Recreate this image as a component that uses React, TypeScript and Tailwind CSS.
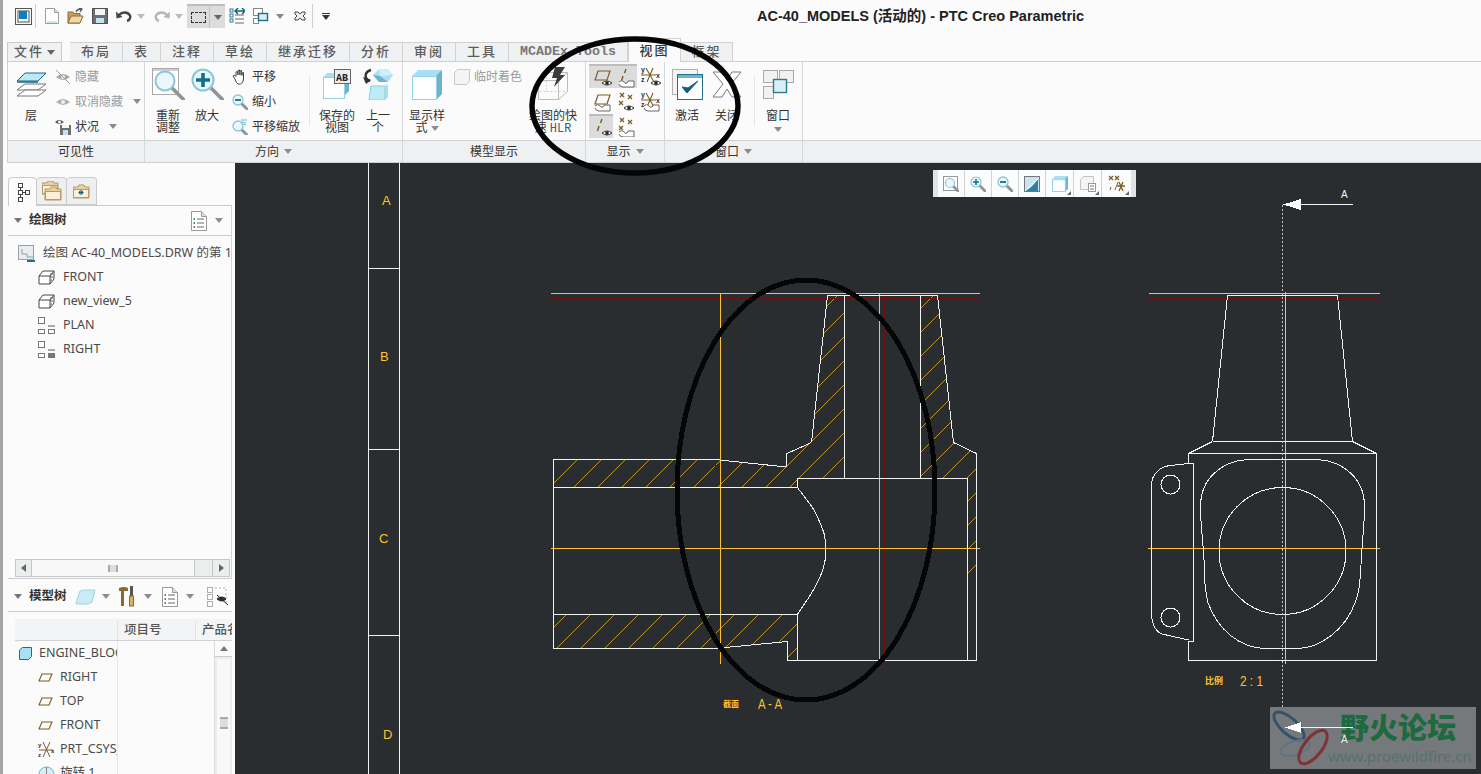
import React from 'react';

const Caret = ({ className = '', color = '#8c8c8c' }: { className?: string; color?: string }) => (
  <svg width="8" height="5" viewBox="0 0 8 5" className={className}>
    <path d="M0 0h8L4 5z" fill={color} />
  </svg>
);

const Svg = ({ w, h, children }: { w: number; h: number; children: React.ReactNode }) => (
  <svg width={w} height={h} viewBox={`0 0 ${w} ${h}`} className="block shrink-0">
    {children}
  </svg>
);

const Lens = ({ cx, cy, r, sw = 2 }: { cx: number; cy: number; r: number; sw?: number }) => (
  <g>
    <line x1={cx + r * 0.72} y1={cy + r * 0.72} x2={cx + r * 2.05} y2={cy + r * 2.05} stroke="#8f9496" strokeWidth={sw + 1.6} strokeLinecap="round" />
    <circle cx={cx} cy={cy} r={r} fill="#eaf7fb" stroke="#8cc6d8" strokeWidth={sw} />
  </g>
);

const Cube = ({ x, y, s }: { x: number; y: number; s: number }) => (
  <g>
    <path d={`M${x} ${y + s * 0.2}L${x + s * 0.2} ${y}H${x + s}V${y + s * 0.8}L${x + s * 0.8} ${y + s}V${y + s * 0.2}z`} fill="#a8dff2" />
    <path d={`M${x + s * 0.8} ${y + s * 0.2}L${x + s} ${y}V${y + s * 0.8}L${x + s * 0.8} ${y + s}z`} fill="#6fb2cc" />
    <rect x={x + 0.5} y={y + s * 0.2 + 0.5} width={s * 0.8} height={s * 0.8 - 1} fill="#fff" stroke="#93d3e8" />
  </g>
);

// quick access bar
const WindowIcon = () => (
  <Svg w={17} h={17}>
    <rect x="0.5" y="0.5" width="16" height="16" fill="#f4f4f4" stroke="#555" />
    <rect x="3" y="3" width="11" height="11" fill="#fff" stroke="#555" />
    <rect x="4" y="3" width="8" height="8" fill="#0a7fc9" />
  </Svg>
);
const NewIcon = () => (
  <Svg w={14} h={16}>
    <path d="M.5.5h9l4 4v11H.5z" fill="#fff" stroke="#9a9a9a" />
    <path d="M9.5.5v4h4" fill="#e2e2e2" stroke="#9a9a9a" />
    <path d="M2 14h10" stroke="#cfe6ef" strokeWidth="2" />
  </Svg>
);
const OpenIcon = () => (
  <Svg w={17} h={16}>
    <path d="M1 4h5l1 1.500h6V15H1z" fill="#c9a25c" stroke="#8b6a2f" />
    <path d="M1 15l3-7h12l-3 7z" fill="#efd8a5" stroke="#8b6a2f" />
    <path d="M9 4q1-3 5-3M12 0l3 1-2 3" fill="none" stroke="#555" strokeWidth="1.300" />
  </Svg>
);
const SaveIcon = () => (
  <Svg w={16} h={16}>
    <path d="M.5.500h15v15H.5z" fill="#6b7073" stroke="#4d5154" />
    <rect x="3" y="1" width="10" height="6" fill="#f5f5f5" />
    <rect x="4" y="10" width="8" height="5" fill="#c5e3ee" />
  </Svg>
);
const UndoIcon = ({ flip, color }: { flip?: boolean; color: string }) => (
  <svg width="16" height="12" viewBox="0 0 16 12" className={flip ? 'block -scale-x-100' : 'block'}>
    <path d="M3 5c3-3.500 9-3.500 11 .5 1 2.500-1 5-3 5.500" fill="none" stroke={color} strokeWidth="2.400" />
    <path d="M0 1.500l.5 7 6-1.500z" fill={color} />
  </svg>
);
const RegenIcon = () => (
  <Svg w={16} h={16}>
    <g fill="none" stroke="#2e7d9b">
      <rect x="1" y="1" width="3" height="3" />
      <rect x="1" y="6" width="3" height="3" />
      <rect x="1" y="11" width="3" height="3" />
    </g>
    <path d="M6 7h9M6 11h9M6 15h9" stroke="#666" />
    <path d="M7 3h8M13 0l3 3-3 3M9 0L6 3l3 3" fill="none" stroke="#0d5f80" strokeWidth="1.400" />
  </Svg>
);
const WindowsIcon = () => (
  <Svg w={16} h={16}>
    <rect x=".5" y=".5" width="9" height="7" fill="#fff" stroke="#888" />
    <rect x=".5" y="10.500" width="5" height="5" fill="#fff" stroke="#888" />
    <rect x="5.500" y="5.500" width="9" height="7" fill="#d9eef6" stroke="#1f6f8b" strokeWidth="1.400" />
  </Svg>
);
const CloseSmall = () => (
  <Svg w={12} h={10}>
    <path d="M1 1h3l2 2 2-2h3v2L9 5l2 2v2H8L6 7 4 9H1V7l2-2-2-2z" fill="#eee" stroke="#444" />
  </Svg>
);

// ribbon icons
const LayersIcon = () => (
  <Svg w={31} h={25}>
    <path d="M1 18l8-6h21l-8 6z" fill="#fff" stroke="#777" />
    <path d="M1 24l8-6h21l-8 6z" fill="#fff" stroke="#777" />
    <path d="M1 9l8-8h21l-8 8z" fill="#bde7f3" stroke="#1d6a87" />
    <path d="M1 10h21" stroke="#0d5f80" strokeWidth="1.400" />
  </Svg>
);
const RefitIcon = () => (
  <Svg w={33} h={32}>
    <rect x=".5" y=".5" width="26" height="26" fill="#fff" stroke="#a9a9a9" />
    <rect x="1" y="1" width="25" height="2" fill="#cfcfcf" />
    <Lens cx={13} cy={13} r={9.500} />
  </Svg>
);
const ZoomInIcon = () => (
  <Svg w={33} h={32}>
    <Lens cx={12} cy={12} r={10.500} />
    <path d="M12 5v14M5 12h14" stroke="#0f6f92" strokeWidth="3.600" />
  </Svg>
);
const HandIcon = () => (
  <Svg w={16} h={16}>
    <path d="M3 10L1 7l1.500-1L4 7.500V3l1.500-.5L6 6V1.500L7.500 1 8 6V2l1.500-.5L10 6.500V4l1.500-.5V10q0 4-3 5H6q-2-1-3-5z" fill="#fff" stroke="#444" />
  </Svg>
);
const ZoomOutIcon = () => (
  <Svg w={16} h={16}>
    <Lens cx={6} cy={6} r={5} sw={1.300} />
    <path d="M3 6h6" stroke="#0f6f92" strokeWidth="1.800" />
  </Svg>
);
const PanZoomIcon = () => (
  <Svg w={16} h={16}>
    <Lens cx={6} cy={7} r={5} sw={1.300} />
    <path d="M9 1q3 0 6 0M10 3q2 0 4 1M11 5l3 1" stroke="#62c1de" fill="none" />
  </Svg>
);
const SavedViewIcon = () => (
  <Svg w={28} h={30}>
    <path d="M0 8l4-4h22v18l-4 4H0z" fill="#a8dff2" />
    <path d="M22 8l4-4v18l-4 4z" fill="#6fb2cc" />
    <rect x=".5" y="8.500" width="21" height="21" fill="#fff" stroke="#93d3e8" />
    <rect x="11.500" y=".5" width="16" height="14" fill="#eee" stroke="#666" />
    <text x="13" y="12" fontSize="10" fontWeight="700" fill="#222" fontFamily="Liberation Mono">AB</text>
  </Svg>
);
const PrevIcon = () => (
  <Svg w={31} h={32}>
    <path d="M10 7l6-6h9l5 6-5 7h-9z" fill="#a8dff2" />
    <path d="M16 1h9l5 6-13 1z" fill="#cdeffa" />
    <path d="M10 7l7 1 8 6h-9z" fill="#6fb2cc" />
    <path d="M8 18h14l3-2v13l-3 3H6z" fill="#a8dff2" />
    <path d="M8 18h14v14H6z" fill="#bdebf8" stroke="#8ccfe4" />
    <path d="M7 13C1 11 1 4 8 2" fill="none" stroke="#333" strokeWidth="2.400" />
    <path d="M0 9l3 7 5-4z" fill="#333" />
  </Svg>
);
const StyleIcon = () => (
  <Svg w={30} h={31}>
    <Cube x={0} y={1} s={30} />
  </Svg>
);
const HlrIcon = () => (
  <Svg w={30} h={34}>
    <path d="M.5 13.500h20v19H.5zM.5 13.500l8-8h21v19l-9 8M20.500 13.500l9-8" fill="none" stroke="#bcbcbc" />
    <path d="M8.500 5.500v19H.5M8.500 24.500h21" fill="none" stroke="#cfcfcf" strokeDasharray="2 2" />
    <path d="M17 0h10l-5 8h5l-11 12 3-9h-5z" fill="#3b3b3b" />
  </Svg>
);
const ActivateIcon = () => (
  <Svg w={31} h={31}>
    <rect x=".5" y=".5" width="25" height="25" fill="#f4f4f4" stroke="#b0b0b0" />
    <rect x="5.500" y="5.500" width="25" height="25" fill="#fff" stroke="#1f6f8b" />
    <rect x="6" y="6" width="24" height="3" fill="#6fb2cc" />
    <path d="M10 18l5 6 11-12-10 7z" fill="#0f5f80" stroke="#0f5f80" />
  </Svg>
);
const CloseLarge = () => (
  <Svg w={30} h={27}>
    <path d="M1 1h9l5 8 5-8h9L19 13l10 13h-9l-5-8-5 8H1l10-13z" fill="#fff" stroke="#7a7a7a" />
  </Svg>
);
const WindowLarge = () => (
  <Svg w={31} h={29}>
    <rect x=".5" y=".5" width="14" height="12" fill="#f1f1f1" stroke="#a9a9a9" />
    <rect x="16.500" y=".5" width="14" height="12" fill="#f1f1f1" stroke="#a9a9a9" />
    <rect x=".5" y="16.500" width="10" height="12" fill="#f1f1f1" stroke="#a9a9a9" />
    <rect x="10.500" y="9.500" width="13" height="13" fill="#d9eef6" stroke="#2a7b98" strokeWidth="1.400" />
  </Svg>
);
const EyeOff = () => (
  <Svg w={16} h={16}>
    <path d="M1 8q7-6 14 0q-7 6-14 0z" fill="#aaa" />
    <circle cx="8" cy="8" r="2" fill="#eee" />
    <path d="M1 1l14 14" stroke="#999" />
  </Svg>
);
const EyeOn = () => (
  <Svg w={16} h={16}>
    <path d="M1 8q7-6 14 0q-7 6-14 0z" fill="#b0b0b0" />
    <circle cx="8" cy="8" r="2" fill="#eee" />
  </Svg>
);
const StateIcon = () => (
  <Svg w={16} h={17}>
    <path d="M0 4q4-4 9 0q-5 4-9 0z" fill="#555" />
    <circle cx="4.500" cy="4" r="1.500" fill="#fff" />
    <rect x="5" y="7" width="11" height="10" fill="#6b7073" />
    <rect x="7" y="7" width="7" height="3" fill="#f5f5f5" />
    <rect x="8" y="12" width="5" height="5" fill="#c5e3ee" />
  </Svg>
);

const brown = '#7a5c25';
const Eye = ({ x, y }: { x: number; y: number }) => (
  <g>
    <path d={`M${x - 5} ${y}q5-4 10 0q-5 4-10 0z`} fill="#fff" stroke="#333" />
    <circle cx={x} cy={y} r="1.800" fill="#222" />
  </g>
);
const Note = ({ x, y }: { x: number; y: number }) => (
  <path d={`M${x} ${y + 3}q3-3 5 0t4 0v-1h6v6h-11q-3 0-4-3`} fill="#fff" stroke="#666" />
);
const Plane = () => <path d="M5 14L8 5h12l-3 9z" fill="none" stroke={brown} strokeWidth="1.200" />;
const Axis = () => <path d="M12 3l-1.500 4M9 10l-1.500 5" stroke={brown} strokeWidth="1.400" />;
const Cross = ({ x, y }: { x: number; y: number }) => (
  <path d={`M${x - 2} ${y - 2}l4 4M${x + 2} ${y - 2}l-4 4`} stroke={brown} strokeWidth="1.200" />
);
const Points = () => (
  <>
    <Cross x={8} y={5} />
    <Cross x={16} y={7} />
    <Cross x={7} y={13} />
  </>
);
const Csys = () => (
  <>
    <path d="M8 3l8 14M15 3L9 17M3 10h15" stroke={brown} strokeWidth="1.100" />
    <text x="3" y="7" fontSize="7" fontWeight="700" fill="#333" fontFamily="Liberation Sans">y</text>
    <text x="3" y="17" fontSize="7" fontWeight="700" fill="#333" fontFamily="Liberation Sans">z</text>
    <text x="18" y="13" fontSize="7" fontWeight="700" fill="#333" fontFamily="Liberation Sans">x</text>
  </>
);

const displayCells: { on?: boolean; el?: React.ReactNode }[] = [
  { on: true, el: <><Plane /><Eye x={17} y={17} /></> },
  { on: true, el: <><Axis /><Note x={5} y={13} /></> },
  { el: <><Csys /><Eye x={18} y={18} /></> },
  { el: <><Plane /><Note x={5} y={13} /></> },
  { el: <><Points /><Eye x={15} y={18} /></> },
  { el: <><Csys /><Note x={6} y={13} /></> },
  { on: true, el: <><Axis /><Eye x={17} y={17} /></> },
  { el: <><Points /><Note x={5} y={14} /></> },
];

// left panel icons
const TreeTabIcon = () => (
  <Svg w={14} h={19}>
    <g fill="none" stroke="#444">
      <rect x="2.500" y=".5" width="4" height="4" />
      <rect x="2.500" y="7.500" width="4" height="4" />
      <rect x="2.500" y="14.500" width="4" height="4" />
      <rect x="9.500" y="7.500" width="4" height="4" />
      <path d="M4.500 4.500v3M4.500 11.500v3M6.500 9.500h3" />
    </g>
  </Svg>
);
const Folder = ({ x, y }: { x: number; y: number }) => (
  <g>
    <path d={`M${x} ${y + 2}h5l1-2h5l1 2h4v11H${x}z`} fill="#ead09a" stroke="#b89a63" />
    <rect x={x + 0.5} y={y + 4.500} width="15" height="8" fill="#f8f0dc" stroke="#b89a63" />
  </g>
);
const FoldersIcon = () => (
  <Svg w={20} h={20}>
    <Folder x={0} y={0} />
    <Folder x={3} y={6} />
  </Svg>
);
const FolderStarIcon = () => (
  <Svg w={17} h={16}>
    <Folder x={0} y={2} />
    <path d="M8 7v5M5.500 9.500h5M6 8l4 3M10 8l-4 3" stroke="#0f5f80" />
  </Svg>
);
const ListIcon = () => (
  <Svg w={16} h={20}>
    <path d="M.5.5h10l5 5v14H.5z" fill="#fff" stroke="#999" />
    <path d="M10.500.5v5h5" fill="#ddd" stroke="#999" />
    <path d="M6 8h7M6 12h7M6 16h7" stroke="#666" />
    <path d="M2.500 8h1.500M2.500 12h1.500M2.500 16h1.500" stroke="#0f5f80" strokeWidth="1.500" />
  </Svg>
);
const SheetIcon = () => (
  <Svg w={17} h={17}>
    <rect x=".5" y=".5" width="15" height="14" fill="#e9edf0" stroke="#9a9fa3" />
    <path d="M4 4v5h5v3h6" fill="none" stroke="#999" />
    <path d="M9 16h8" stroke="#1f6f8b" strokeWidth="2" />
  </Svg>
);
const ViewCube = () => (
  <Svg w={17} h={15}>
    <path d="M1 6l4-5h11v8l-4 5H1zM1 6h11v8M12 6l4-5" fill="#fff" stroke="#444" />
    <path d="M12 4h3M12 7h3M12 10h2" stroke="#555" />
  </Svg>
);
const ViewBoxes = ({ dark }: { dark?: boolean }) => (
  <Svg w={17} h={17}>
    <rect x=".5" y=".5" width="6" height="6" fill="#fff" stroke="#777" />
    <rect x=".5" y="12.500" width="6" height="4" fill="#fff" stroke="#777" />
    <rect x="10.500" y="12.500" width="6" height="4" fill={dark ? '#777' : '#fff'} stroke="#777" />
    <path d="M10 9h7" stroke="#555" />
  </Svg>
);
const TreeRow = ({ icon, label, className }: { icon: React.ReactNode; label: string; className: string }) => (
  <div className={`flex h-[24px] items-center whitespace-nowrap text-[12.500px] text-[#4a4a4a] ${className}`}>
    {icon}
    <span>{label}</span>
  </div>
);
const PlaneSmall = () => (
  <svg width="15" height="9" viewBox="0 0 15 9" className="mr-[7px] shrink-0">
    <path d="M1 8l3-7h10l-3 7z" fill="none" stroke={brown} strokeWidth="1.100" />
  </svg>
);

const Large = ({ icon, className, children }: { icon: React.ReactNode; className: string; children: React.ReactNode }) => (
  <div className={`flex shrink-0 flex-col items-center text-center text-[12px] leading-[12px] text-[#333] ${className}`}>
    <div className="mb-[4px] flex h-[44px] items-center justify-center">{icon}</div>
    {children}
  </div>
);

const Small = ({ icon, label, gray, caret }: { icon: React.ReactNode; label: string; gray?: boolean; caret?: boolean }) => (
  <div className={`flex h-[25px] items-center gap-[4px] whitespace-nowrap text-[12px] ${gray ? 'text-[#9b9b9b]' : 'text-[#333]'}`}>
    {icon}
    <span>{label}</span>
    {caret && <Caret className="ml-[6px]" />}
  </div>
);

const Footer = ({ label, caret }: { label: string; caret?: boolean }) => (
  <div className="flex h-[22px] items-center justify-center gap-[5px] border-t border-[#cfd1d2] bg-[#eff0f1] text-[12px] text-[#333]">
    {label}
    {caret && <Caret />}
  </div>
);

const tabs = [
  { label: '布局', w: 'w-[53px]' },
  { label: '表', w: 'w-[38px]' },
  { label: '注释', w: 'w-[53px]' },
  { label: '草绘', w: 'w-[53px]' },
  { label: '继承迁移', w: 'w-[83px]' },
  { label: '分析', w: 'w-[53px]' },
  { label: '审阅', w: 'w-[53px]' },
  { label: '工具', w: 'w-[53px]' },
];

const hatchLines = Array.from({ length: 22 }, (_, i) => 1037 + i * 24);

const yellow = '#ffc22e';
const red = '#6a1010';
const white = '#f2f2f2';

const Drawing = () => (
  <svg viewBox="235 163 1246 611" className="block h-full w-full" shapeRendering="crispEdges" fill="none">
    <defs>
      <clipPath id="hatch">
        <path d="M553.500 459.500H715L786.500 467L787 453.500L811.500 442.500L827.500 296H844.500V478.500H797.500V487.500H553.500Z" />
        <path d="M920.500 296H937.500L953.500 442.500L976.500 453.500V660.500H967.500V478.500H920.500Z" />
        <path d="M553.500 614.500H797.500V660.500H787.500V641.500L725 647.500L553.500 648.500Z" />
      </clipPath>
    </defs>

    {/* border of the sheet */}
    <g stroke={white}>
      <path d="M368.500 163V774M399.500 163V774M368 268.500H399M368 449.500H399M368 635.500H399" />
    </g>
    <g fill={yellow} fontSize="13" fontFamily="Liberation Sans">
      <text x="382" y="205">A</text>
      <text x="380" y="361">B</text>
      <text x="379" y="543">C</text>
      <text x="383" y="739">D</text>
    </g>

    {/* section view */}
    <g stroke={yellow} strokeWidth="0.7" clipPath="url(#hatch)">
      {hatchLines.map(s => (
        <line key={s} x1={500} y1={s - 500} x2={1000} y2={s - 1000} />
      ))}
    </g>
    <path d="M550 298.500H980M550 553.500H980M715.500 293V663M884.500 293V663" stroke={red} />
    <path d="M551 293.500H980M551 548.500H980M720.500 293V664M879.500 293V663" stroke={yellow} />
    <g stroke={white}>
      <path d="M553.500 459.500H715L786.500 467L787 453.500L811.500 442.500L827.500 295.500H937.500L953.500 442.500L976.500 453.500V660.500H787.500V641.500L725 647.500L715 648.500H553.500Z" />
      <path d="M553.500 487.500H797.500V478.500H967.500V660.500M844.500 295.500V478.500M920.500 295.500V478.500M553.500 614.500H797.500V660.500" />
      <path d="M797.500 487.500C803 496 813 505 818 518C822 528 826 534 826 550C826 568 818 582 811 594C805 604 801 608 797.500 614.500" />
    </g>
    <ellipse cx="806" cy="490" rx="129" ry="210" stroke="#050505" strokeWidth="5" />
    <g fill={yellow}>
      <text x="723" y="707" fontSize="8" fontWeight="700" fontFamily="Noto Sans CJK SC">截面</text>
      <text x="758" y="709" fontSize="14" fontFamily="Liberation Sans" textLength="24" lengthAdjust="spacingAndGlyphs">A - A</text>
      <text x="1205" y="684" fontSize="9" fontWeight="700" fontFamily="Noto Sans CJK SC">比例</text>
      <text x="1240" y="686" fontSize="15" fontFamily="Liberation Sans" textLength="23" lengthAdjust="spacingAndGlyphs">2 : 1</text>
    </g>

    {/* right view */}
    <path d="M1148 298.500H1380M1148 553.500H1378M1279.500 295V661" stroke={red} />
    <path d="M1149 293.500H1380M1148 548.500H1380M1285.500 292V664" stroke={yellow} />
    <g stroke={white}>
      <path d="M1227.500 295.500H1337.500L1352.500 441.500L1376.500 453.500V660.500H1188.500V641.500H1193.500V463.500H1188.500V453.500L1212.500 441.500ZM1212.500 441.500H1352.500M1188.500 453.500H1376.500" />
      <path d="M1188.500 463.500L1170 465.500C1158 467 1152 476 1151.500 484V616C1152 624 1156 632 1162 634L1188.500 640" />
      <circle cx="1170.500" cy="484.500" r="9.500" />
      <circle cx="1170.500" cy="617.500" r="9.500" />
      <circle cx="1282.500" cy="551" r="63.500" />
      <path d="M1248 459.500H1317C1345 461 1364 480 1364.500 505C1365 520 1362 540 1361 565C1360 580 1360 590 1355 603C1345 630 1320 648 1298 648.500H1265C1240 648 1218 630 1208 603C1205 590 1204 575 1204 560C1203 540 1200 520 1200.500 505C1201 480 1220 461 1248 459.500Z" />
    </g>
    <path d="M1282.500 205V727" stroke="#c4c4c4" strokeDasharray="2 2" />

    {/* watermark */}
    <rect x="1270" y="707" width="206" height="62" fill="#76797b" />
    <g shapeRendering="auto">
      <ellipse cx="1289" cy="726" rx="19" ry="8" transform="rotate(42 1289 726)" stroke="#33536b" strokeWidth="3" />
      <ellipse cx="1295" cy="748" rx="15" ry="7" transform="rotate(-18 1295 748)" stroke="#5d7484" strokeWidth="2" />
      <ellipse cx="1313" cy="747" rx="20" ry="9" transform="rotate(-52 1313 747)" stroke="#7f3338" strokeWidth="3" />
      <text x="1340" y="739" fontSize="29" fontWeight="900" fill="#1d6a41" fontFamily="Noto Sans CJK SC">野火论坛</text>
      <text x="1328" y="762" fontSize="15" fill="#55716f" fontFamily="Noto Sans">www.proewildfire.cn</text>
    </g>

    {/* section arrows */}
    <path d="M1300 204.500H1353M1300 727.500H1353" stroke={white} />
    <path d="M1283 204.500L1301 199V210ZM1285 727.500L1301 722V733Z" fill="#fff" />
    <g fill={white} fontSize="10" fontFamily="Liberation Sans">
      <text x="1341" y="198">A</text>
      <text x="1341" y="743">A</text>
    </g>
  </svg>
);

const FloatCell = ({ children, className }: { children: React.ReactNode; className: string }) => (
  <div className={`relative flex h-full items-center justify-center border-r border-[#d0d2d3] ${className}`}>{children}</div>
);

const Corner = () => <span className="absolute bottom-[2px] right-[2px] h-0 w-0 border-b-[4px] border-l-[4px] border-b-[#666] border-l-transparent" />;

const FloatingBar = () => (
  <div className="absolute left-[698px] top-[7px] flex h-[27px] border-x-[5px] border-[#e2e3e4] bg-[#fcfcfc]">
    <FloatCell className="w-[27px]">
      <Svg w={16} h={16}>
        <rect x=".5" y=".5" width="14" height="14" fill="#fff" stroke="#999" />
        <Lens cx={7} cy={7} r={4.500} sw={1.200} />
      </Svg>
    </FloatCell>
    <FloatCell className="w-[27px]">
      <Svg w={16} h={16}>
        <Lens cx={6} cy={6} r={5} sw={1.200} />
        <path d="M3 6h6M6 3v6" stroke="#0f6f92" strokeWidth="1.600" />
      </Svg>
    </FloatCell>
    <FloatCell className="w-[27px]">
      <ZoomOutIcon />
    </FloatCell>
    <FloatCell className="w-[27px]">
      <Svg w={16} h={16}>
        <rect x=".5" y=".5" width="15" height="15" fill="#c5e6f1" stroke="#777" />
        <path d="M1 15Q8 12 14 3V15Z" fill="#2f7f9e" />
        <path d="M1 15L14 3" stroke="#fff" />
      </Svg>
    </FloatCell>
    <FloatCell className="w-[28px]">
      <Svg w={16} h={16}>
        <Cube x={0} y={0} s={16} />
      </Svg>
      <Corner />
    </FloatCell>
    <FloatCell className="w-[28px]">
      <Svg w={16} h={16}>
        <path d="M.5 3.500l3-3h10v10l-3 3H.5z" fill="#f4f4f4" stroke="#c2c2c2" />
        <rect x="8.500" y="7.500" width="7" height="8" fill="#fff" stroke="#999" />
        <path d="M10 10h4M10 13h4" stroke="#777" />
      </Svg>
      <Corner />
    </FloatCell>
    <div className="relative flex w-[29px] items-center justify-center">
      <Svg w={18} h={17}>
        <Cross x={3} y={3} />
        <Cross x={9} y={3} />
        <path d="M10 7l-1 3M8 12l-1 3M3 12l-1 3" stroke={brown} />
        <path d="M11 7l4 9M15 7l-4 9M8 11h9" stroke={brown} strokeWidth="1.300" />
      </Svg>
      <Corner />
    </div>
  </div>
);

export default function App() {
  return (
    <div className="relative flex h-screen w-full flex-col overflow-hidden border-l-[3px] border-[#a4a4a4] bg-[#fbfbfb] [font-family:'Noto_Sans','Noto_Sans_CJK_SC',sans-serif]">
      {/* title bar */}
      <div className="relative flex h-[42px] shrink-0 items-center pb-[10px] pl-[12px]">
        <WindowIcon />
        <div className="ml-[3px] mr-[9px] h-[24px] w-px bg-[#cfcfcf]" />
        <NewIcon />
        <div className="ml-[8px]"><OpenIcon /></div>
        <div className="ml-[8px]"><SaveIcon /></div>
        <div className="ml-[8px]"><UndoIcon color="#444" /></div>
        <Caret className="ml-[5px]" color="#bbb" />
        <div className="ml-[9px]"><UndoIcon flip color="#b5b5b5" /></div>
        <Caret className="ml-[5px]" color="#bbb" />
        <div className="ml-[4px] flex h-[24px] w-[38px] border-t-2 border-[#bdbdbd] bg-[#dcdcdc]">
          <div className="flex w-[23px] items-center justify-center border-r border-[#c4c4c4]">
            <div className="h-[11px] w-[15px] border border-dashed border-[#333]" />
          </div>
          <div className="flex flex-1 items-center justify-center">
            <Caret color="#666" />
          </div>
        </div>
        <div className="ml-[4px]"><RegenIcon /></div>
        <div className="ml-[8px]"><WindowsIcon /></div>
        <Caret className="ml-[7px]" color="#888" />
        <div className="ml-[10px]"><CloseSmall /></div>
        <div className="ml-[6px] mr-[9px] h-[24px] w-px bg-[#cfcfcf]" />
        <div className="flex flex-col items-center gap-[1px]">
          <div className="h-[1px] w-[8px] bg-[#333]" />
          <Caret color="#333" />
        </div>
        <div className="absolute left-[754px] top-[6px] whitespace-nowrap text-[14.500px] font-bold leading-[20px] text-[#222] [font-family:'Liberation_Sans','Noto_Sans_CJK_SC',sans-serif]">
          AC-40_MODELS (活动的) - PTC Creo Parametric
        </div>
      </div>

      {/* tabs */}
      <div className="relative z-10 flex h-[19px] shrink-0 items-end pl-[4px] text-[13px] text-[#5c5c5c]">
        <div className="mr-[8px] flex h-[19px] w-[55px] items-center justify-center gap-[3px] border border-b-0 border-[#c9cbcc] bg-[#f0f1f2] font-medium tracking-[2px]">
          文件
          <Caret color="#666" />
        </div>
        {tabs.map(t => (
          <div key={t.label} className={`flex h-[19px] items-center justify-center border-r border-t border-[#cfd1d2] bg-[#f0f1f2] font-medium tracking-[2px] first:border-l ${t.w}`}>
            {t.label}
          </div>
        ))}
        <div className="flex h-[19px] w-[119px] items-center justify-center border-r border-t border-[#cfd1d2] bg-[#f0f1f2] text-[13.300px] font-bold text-[#777] [font-family:'Liberation_Mono',monospace]">
          MCADEx Tools
        </div>
        <div className="-mb-px flex h-[24px] w-[53px] items-center justify-center border-x border-t border-[#cfd1d2] bg-[#fbfbfb] font-medium tracking-[2px] text-[#333]">
          视图
        </div>
        <div className="flex h-[19px] w-[52px] items-center justify-center border-r border-t border-[#cfd1d2] bg-[#f0f1f2] font-medium tracking-[2px]">
          框架
        </div>
      </div>

      {/* ribbon */}
      <div className="ml-[4px] flex h-[102px] shrink-0 border-y border-l border-[#cdcfd0]">
        <div className="flex w-[137px] shrink-0 flex-col border-r border-[#d5d7d8]">
          <div className="flex flex-1">
            <Large className="w-[46px]" icon={<LayersIcon />}>层</Large>
            <div className="pl-px pt-[2px]">
              <Small gray icon={<EyeOff />} label="隐藏" />
              <Small gray caret icon={<EyeOn />} label="取消隐藏" />
              <Small caret icon={<StateIcon />} label="状况" />
            </div>
          </div>
          <Footer label="可见性" />
        </div>

        <div className="flex w-[258px] shrink-0 flex-col border-r border-[#d5d7d8]">
          <div className="flex flex-1">
            <Large className="w-[46px]" icon={<RefitIcon />}>重新<br />调整</Large>
            <Large className="w-[32px]" icon={<ZoomInIcon />}>放大</Large>
            <div className="ml-[9px] pt-[2px]">
              <Small icon={<HandIcon />} label="平移" />
              <Small icon={<ZoomOutIcon />} label="缩小" />
              <Small icon={<PanZoomIcon />} label="平移缩放" />
            </div>
            <div className="ml-[9px] mr-[5px] mt-[14px] h-[50px] w-px bg-[#e6e6e6]" />
            <Large className="w-[44px]" icon={<SavedViewIcon />}>保存的<br />视图</Large>
            <Large className="w-[38px]" icon={<PrevIcon />}>上一<br />个</Large>
          </div>
          <Footer label="方向" caret />
        </div>

        <div className="flex w-[183px] shrink-0 flex-col border-r border-[#d5d7d8]">
          <div className="flex flex-1">
            <Large className="w-[48px]" icon={<StyleIcon />}>
              显示样
              <span className="flex items-center gap-[3px]">式<Caret /></span>
            </Large>
            <div className="ml-[3px] w-[75px] pt-[2px]">
              <Small gray label="临时着色" icon={
                <Svg w={16} h={16}>
                  <path d="M.5 3.500l3-3h12v12l-3 3H.5z" fill="#f4f4f4" stroke="#c9c9c9" />
                </Svg>
              } />
            </div>
            <Large className="w-[48px]" icon={<HlrIcon />}>
              绘图的快
              <span className="whitespace-nowrap">速 <span className="[font-family:'Liberation_Mono',monospace] text-[#4a5a6a]">HLR</span></span>
            </Large>
          </div>
          <Footer label="模型显示" />
        </div>

        <div className="flex w-[79px] shrink-0 flex-col border-r border-[#d5d7d8]">
          <div className="grid flex-1 grid-cols-[24px_24px_24px] content-start gap-y-px pl-[3px] pt-[2px]">
            {displayCells.map((c, i) => (
              <div key={i} className={`flex h-[24px] w-[24px] items-center justify-center ${c.on ? 'border-t-2 border-[#bdbdbd] bg-[#dcdcdc]' : ''}`}>
                <Svg w={23} h={22}>{c.el}</Svg>
              </div>
            ))}
          </div>
          <Footer label="显示" caret />
        </div>

        <div className="flex w-[138px] shrink-0 flex-col border-r border-[#d5d7d8]">
          <div className="flex flex-1">
            <Large className="w-[44px]" icon={<ActivateIcon />}>激活</Large>
            <Large className="w-[36px]" icon={<CloseLarge />}>关闭</Large>
            <div className="ml-[9px] mt-[14px] h-[50px] w-px bg-[#e6e6e6]" />
            <Large className="w-[46px]" icon={<WindowLarge />}>
              窗口
              <Caret className="mt-[5px]" />
            </Large>
          </div>
          <Footer label="窗口" caret />
        </div>

        <div className="flex flex-1 flex-col">
          <div className="flex-1" />
          <div className="h-[22px] border-t border-[#cfd1d2] bg-[#eff0f1]" />
        </div>
      </div>

      {/* main area */}
      <div className="flex min-h-0 flex-1">
        <aside className="flex w-[232px] shrink-0 flex-col overflow-hidden border-r-[3px] border-[#fbfbfb] pl-[5px]">
          <div className="mt-[14px] flex h-[28px] shrink-0 items-end">
            <div className="z-10 -mb-px flex h-[29px] w-[29px] items-center justify-center rounded-t-sm border border-b-0 border-[#c9cbcc] bg-[#fbfbfb]">
              <TreeTabIcon />
            </div>
            <div className="flex h-[28px] w-[30px] items-center justify-center rounded-t-sm border-y border-r border-[#c9cbcc] bg-[#eeeff0]">
              <FoldersIcon />
            </div>
            <div className="flex h-[28px] w-[30px] items-center justify-center rounded-t-sm border-y border-r border-[#c9cbcc] bg-[#eeeff0]">
              <FolderStarIcon />
            </div>
          </div>

          <div className="flex h-[373px] shrink-0 flex-col border-r border-t border-[#d2d4d5] border-t-[#c9cbcc]">
            <div className="flex h-[30px] shrink-0 items-center border-b border-[#c9cbcc] pl-[6px] pr-[8px]">
              <Caret className="mr-[7px]" color="#777" />
              <span className="flex-1 text-[12.500px] font-bold text-[#333]">绘图树</span>
              <ListIcon />
              <Caret className="ml-[8px]" />
            </div>
            <div className="min-h-0 flex-1 overflow-hidden pt-[5px]">
              <TreeRow className="pl-[10px]" label="绘图 AC-40_MODELS.DRW 的第 1 页" icon={<span className="mr-[8px]"><SheetIcon /></span>} />
              <TreeRow className="pl-[30px]" label="FRONT" icon={<span className="mr-[8px]"><ViewCube /></span>} />
              <TreeRow className="pl-[30px]" label="new_view_5" icon={<span className="mr-[8px]"><ViewCube /></span>} />
              <TreeRow className="pl-[30px]" label="PLAN" icon={<span className="mr-[8px]"><ViewBoxes /></span>} />
              <TreeRow className="pl-[30px]" label="RIGHT" icon={<span className="mr-[8px]"><ViewBoxes dark /></span>} />
            </div>
            <div className="mb-px ml-[7px] mr-px flex h-[18px] shrink-0 border border-[#c4c6c7] bg-[#eceded]">
              <div className="flex w-[16px] items-center justify-center border-r border-[#c4c6c7]">
                <span className="h-0 w-0 border-y-[4px] border-r-[5px] border-y-transparent border-r-[#666]" />
              </div>
              <div className="flex flex-1 items-center justify-center border-r border-[#c4c6c7] bg-[#f8f8f8]">
                <span className="h-[7px] w-[10px] border-x-2 border-[#aaa] bg-[#ddd]" />
              </div>
              <div className="w-[18px] border-r border-[#c4c6c7]" />
              <div className="flex w-[16px] items-center justify-center">
                <span className="h-0 w-0 border-y-[4px] border-l-[5px] border-y-transparent border-l-[#666]" />
              </div>
            </div>
          </div>

          <div className="flex min-h-0 flex-1 flex-col border-t border-[#c9cbcc]">
            <div className="flex h-[33px] shrink-0 items-center border-b border-[#c9cbcc] pl-[6px] pt-[3px]">
              <Caret className="mr-[7px]" color="#777" />
              <span className="w-[46px] shrink-0 text-[12.500px] font-bold text-[#333]">模型树</span>
              <Svg w={21} h={16}>
                <path d="M1 14l4-12 4-1h11l-3 12-4 2H1z" fill="#c9ecf6" stroke="#9dd3e4" />
              </Svg>
              <Caret className="ml-[6px] mr-[9px]" />
              <Svg w={16} h={21}>
                <path d="M0 2q5-2 9 0v3H5v15H2V5H0z" fill="#8b6a2f" />
                <path d="M11 0h3v10h-3z" fill="#555" />
                <rect x="10.500" y="10" width="4" height="10" fill="#d9b35f" stroke="#8b6a2f" />
              </Svg>
              <Caret className="ml-[9px] mr-[10px]" />
              <ListIcon />
              <Caret className="ml-[8px] mr-[13px]" />
              <Svg w={21} h={20}>
                <g fill="none" stroke="#b0b0b0">
                  <rect x=".5" y=".5" width="5" height="5" />
                  <rect x=".5" y="7.500" width="5" height="5" />
                  <rect x=".5" y="14.500" width="5" height="5" />
                  <path d="M8 1h11v17" strokeDasharray="2 2" />
                </g>
                <path d="M10 12q5-4 9 0q-4 4-9 0zM10 8l11 10" fill="#333" stroke="#222" />
              </Svg>
            </div>
            <div className="ml-[7px] mt-[7px] flex h-[22px] shrink-0 whitespace-nowrap border-b border-[#cfd1d2] bg-[#f3f4f5] pt-[2px] text-[12.500px] font-medium text-[#555]">
              <div className="w-[103px] shrink-0 border-r border-[#e0e2e3]" />
              <div className="flex w-[78px] shrink-0 items-center border-r border-[#e0e2e3] pl-[6px]">项目号</div>
              <div className="flex min-w-0 flex-1 items-center overflow-hidden pl-[6px]">产品名称</div>
            </div>
            <div className="ml-[7px] flex min-h-0 flex-1 overflow-hidden">
              <div className="w-[103px] shrink-0 overflow-hidden border-r border-[#e4e6e7]">
                <TreeRow className="pl-[4px]" label="ENGINE_BLOCK" icon={
                  <span className="mr-[7px]">
                    <Svg w={13} h={13}>
                      <path d="M.5 3l3-2.500h9v9l-3 3h-9z" fill="#a8e0f4" stroke="#1f6f8b" />
                    </Svg>
                  </span>
                } />
                <TreeRow className="pl-[23px]" label="RIGHT" icon={<PlaneSmall />} />
                <TreeRow className="pl-[23px]" label="TOP" icon={<PlaneSmall />} />
                <TreeRow className="pl-[23px]" label="FRONT" icon={<PlaneSmall />} />
                <TreeRow className="pl-[23px]" label="PRT_CSYS_DEF" icon={
                  <span className="mr-[5px]">
                    <Svg w={17} h={17}>
                      <path d="M5 1l7 15M12 1L5 16M1 9h14" stroke={brown} />
                      <text x="0" y="6" fontSize="6" fontWeight="700" fill="#333" fontFamily="Liberation Sans">y</text>
                      <text x="0" y="16" fontSize="6" fontWeight="700" fill="#333" fontFamily="Liberation Sans">z</text>
                      <text x="13" y="12" fontSize="6" fontWeight="700" fill="#333" fontFamily="Liberation Sans">x</text>
                    </Svg>
                  </span>
                } />
                <TreeRow className="pl-[23px]" label="旋转 1" icon={
                  <span className="mr-[5px]">
                    <Svg w={17} h={15}>
                      <ellipse cx="8.500" cy="8" rx="7.500" ry="7" fill="#d5eef6" stroke="#6fb2cc" />
                      <path d="M8.500 1v14" stroke="#888" />
                    </Svg>
                  </span>
                } />
              </div>
              <div className="flex-1" />
              <div className="flex w-[18px] shrink-0 flex-col border-l border-[#d8dadb] bg-[#eceded]">
                <div className="flex h-[16px] shrink-0 items-center justify-center border-b border-[#c9cbcc] bg-[#fafafa]">
                  <span className="h-0 w-0 border-x-[4px] border-b-[5px] border-x-transparent border-b-[#777]" />
                </div>
                <div className="relative mx-[2px] mt-[2px] flex-1 bg-[#f8f8f8]">
                  <div className="mx-auto mt-[58px] h-[12px] w-[8px] border-y-2 border-[#aaa] bg-[#ddd]" />
                </div>
              </div>
            </div>
          </div>
        </aside>

        <div className="relative min-w-0 flex-1 bg-[#292d2f]">
          <Drawing />
          <FloatingBar />
        </div>
      </div>

      {/* hand drawn mark over the ribbon */}
      <svg viewBox="0 0 220 146" className="pointer-events-none absolute left-[524px] top-[33px] z-20 h-[146px] w-[220px]" fill="none">
        <ellipse cx="108" cy="73" rx="103" ry="67" stroke="#050505" strokeWidth="5.500" />
      </svg>
    </div>
  );
}
